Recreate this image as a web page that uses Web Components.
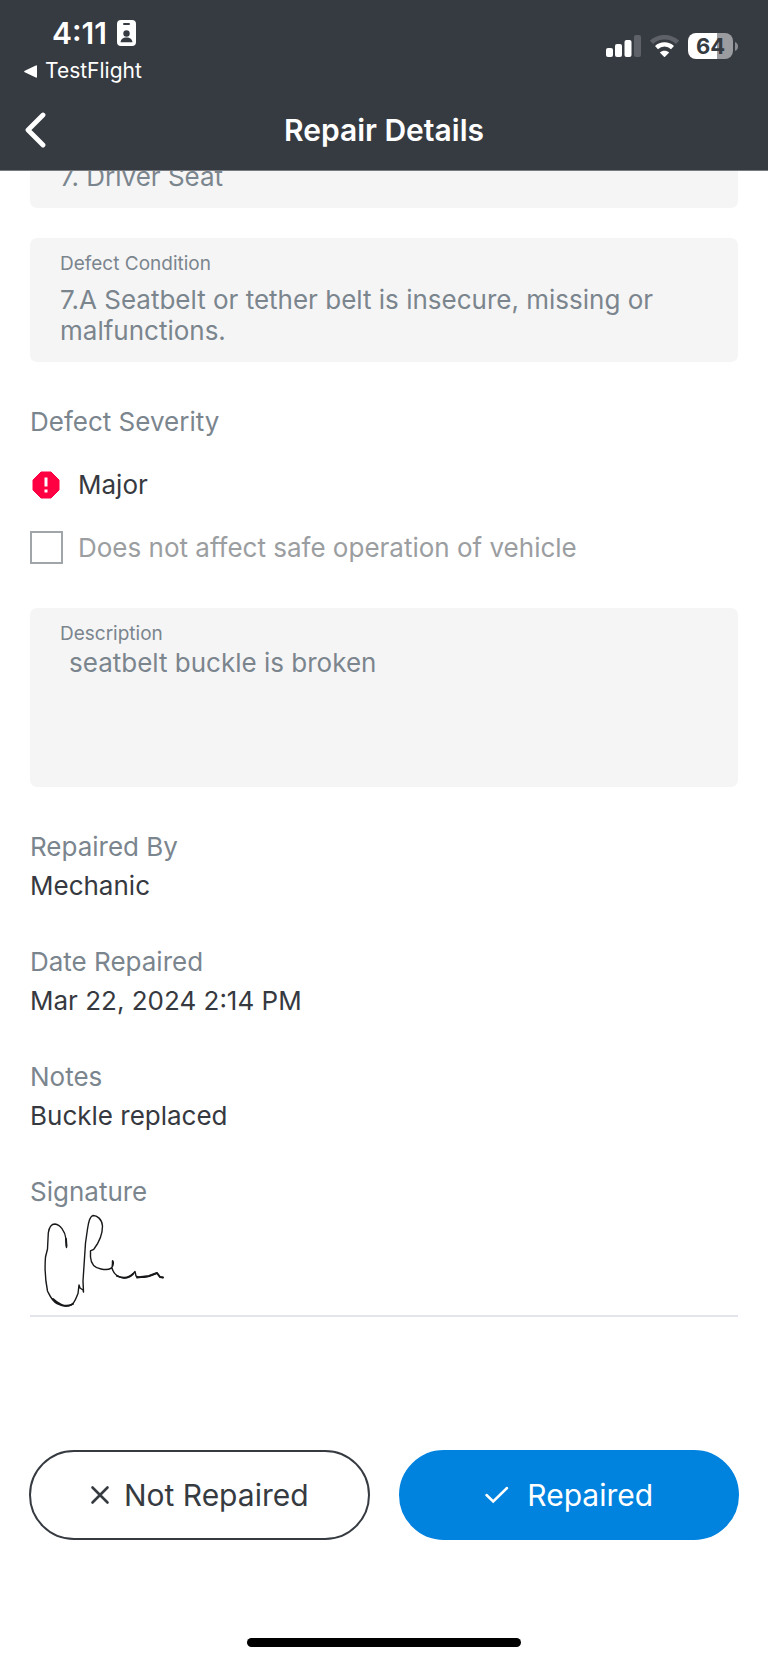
<!DOCTYPE html>
<html lang="en">
<head>
<meta charset="utf-8">
<meta name="viewport" content="width=device-width, initial-scale=1">
<title>Repair Details</title>
<style>
  html { background: #fff; }
  body {
    margin: 0;
    font-family: Inter, "Liberation Sans", sans-serif;
    font-size: 26px;
    line-height: 31px;
    color: #363940;
    --ink: #363a41;
    --muted: #7b858e;
    --panel: #f5f5f5;
    --accent: #0082df;
  }
</style>
</head>
<body>
<repair-page></repair-page>

<template id="status-bar">
  <style>
    :host { display: flex; justify-content: space-between; align-items: flex-start; padding: 16px 30px 0 24px; color: #fff; }
    .time { display: flex; align-items: center; gap: 10px; padding-left: 28px; font-size: 30px; line-height: 34px; font-weight: 600; }
    .return { display: flex; align-items: center; gap: 8px; margin-top: 8px; font-size: 21px; line-height: 26px; color: #fff; text-decoration: none; }
    .right { display: flex; align-items: center; gap: 9px; padding-top: 17px; }
    .battery { display: flex; align-items: center; gap: 2px; }
    .level { width: 45px; border-radius: 8px; text-align: center; font-size: 22px; line-height: 26px; font-weight: 700; color: #363a41; background: linear-gradient(90deg, #fff 64%, #9a9c9f 64%); }
    svg { display: block; }
  </style>
  <div>
    <div class="time"><span>4:11</span>
      <svg width="19" height="26" viewBox="0 0 19 26" aria-hidden="true">
        <rect width="19" height="26" rx="4" fill="#fff"/>
        <rect x="6" y="3" width="7" height="2" rx="1" fill="#363a41"/>
        <circle cx="9.500" cy="13.500" r="3.200" fill="#363a41"/>
        <path d="M3.600 22.300c0-3 2.500-4.800 5.900-4.800s5.900 1.800 5.900 4.800z" fill="#363a41"/>
      </svg>
    </div>
    <a class="return" href="#testflight">
      <svg width="13" height="13" viewBox="0 0 13 13" aria-hidden="true"><path d="M11.800.500Q13 0 13 1.300V11.700Q13 13 11.800 12.500L.800 7.300Q-.600 6.500.800 5.700z" fill="#fff"/></svg>
      <span>TestFlight</span>
    </a>
  </div>
  <div class="right">
    <svg width="35" height="22" viewBox="0 0 35 22" fill="#fff" aria-hidden="true">
      <rect x="0" y="13" width="7" height="9" rx="2"/>
      <rect x="9" y="9" width="7" height="13" rx="2"/>
      <rect x="18.500" y="5" width="7" height="17" rx="2"/>
      <rect x="28" y="0" width="7" height="22" rx="2" opacity=".2"/>
    </svg>
    <svg width="29" height="22" viewBox="0 0 29 22" fill="none" stroke="#fff" aria-hidden="true">
      <path d="M1.500 7.300C8.800.500 20.200.500 27.500 7.300" stroke-width="4.500" opacity=".2"/>
      <path d="M6.500 12.600c4.500-4.200 11.500-4.200 16 0" stroke-width="4.300"/>
      <path d="M14.500 22.300l-4.700-4.900c2.700-2.300 6.700-2.300 9.400 0z" fill="#fff" stroke="none"/>
    </svg>
    <div class="battery"><div class="level">64</div>
      <svg width="3" height="9" viewBox="0 0 3 9" aria-hidden="true"><path d="M0 0c4 1.500 4 7.500 0 9z" fill="#8b8d91"/></svg>
    </div>
  </div>
</template>

<template id="nav-bar">
  <style>
    :host { display: grid; grid-template-columns: 60px 1fr 60px; align-items: center; padding: 28px 0 22px; color: #fff; }
    button { justify-self: start; display: block; margin: 0; padding: 0 0 0 25px; border: 0; background: none; color: inherit; }
    svg { display: block; }
    h1 { margin: 0; text-align: center; font-size: 30px; line-height: 36px; font-weight: 600; }
  </style>
  <button type="button" aria-label="Back"><svg width="21" height="36" viewBox="0 0 21 36" fill="none" stroke="#fff" stroke-width="4.800" stroke-linecap="round" stroke-linejoin="round"><path d="M18 3L3 18l15 15"/></svg></button>
  <h1><slot></slot></h1>
</template>

<template id="read-field">
  <style>
    :host { display: block; padding: 14px 30px 16px; border-radius: 7px; background: var(--panel); color: var(--muted); }
    label { display: block; font-size: 19px; line-height: 24px; margin-bottom: 8px; }
    label:empty { display: none; }
    textarea { display: block; box-sizing: border-box; width: 100%; margin: 0; padding: 0; border: 0; outline: 0; resize: none; overflow: hidden; background: none; font: inherit; color: inherit; }
    :host([multiline]) label { margin-bottom: 1px; }
    :host([multiline]) textarea { padding-left: 9px; }
  </style>
  <label for="value"></label>
  <textarea id="value" readonly></textarea>
</template>

<template id="defect-severity">
  <style>
    :host { display: flex; flex-direction: column; gap: 30px; line-height: 33px; }
    h2 { margin: 0; font: inherit; color: var(--muted); }
    .row { display: grid; grid-template-columns: 34px 1fr; column-gap: 14px; align-items: center; }
    .off { color: #9b9ea1; }
    svg { display: block; }
    input { appearance: none; box-sizing: border-box; width: 33px; height: 33px; margin: 0; border: 2px solid #a0a5aa; background: #fff; }
  </style>
  <h2>Defect Severity</h2>
  <div class="row">
    <svg width="32" height="28" viewBox="0 0 32 28" aria-hidden="true">
      <path d="M11 1h10l8 8v10l-8 8H11l-8-8V9z" fill="#ff0042" stroke="#ff0042" stroke-width="1" stroke-linejoin="round"/>
      <path d="M16 6.500v9M16 18.500v3" stroke="#fff" stroke-width="3"/>
    </svg>
    <span>Major</span>
  </div>
  <div class="row off"><input type="checkbox" id="safe"><label for="safe">Does not affect safe operation of vehicle</label></div>
</template>

<template id="detail-item">
  <style>
    :host { display: flex; flex-direction: column; gap: 8px; }
    .name { color: var(--muted); }
  </style>
  <div class="name"></div>
  <div><slot></slot></div>
</template>

<template id="signature-box">
  <style>
    :host { display: block; border-bottom: 2px solid #e2e6ea; }
    .name { color: var(--muted); }
    svg { display: block; margin: 4px 0 4px 12px; }
  </style>
  <div class="name">Signature</div>
  <svg width="124" height="100" viewBox="0 0 124 100" role="img" aria-label="Signature" fill="none" stroke="#17181a" stroke-width="1.400" stroke-linecap="round" stroke-linejoin="round">
    <path d="M24.500 36.500L24 28C23 20 18 13.500 13 13C9 13 7 17 6.300 22L5.500 38L3.500 46C2.500 58 3.500 70 5.500 80C8 85 10 90 15 92.500C20 95 25 96 29 94C33 92 34 87 36 82.500L37 74L38 77L41 79L41.500 81L41 70L43.500 32L45.500 18C46.500 11 48 5 51 4.500C55 4.500 60 8 60.500 15C60.500 25 55 34 52 38C50 40 48 39 48.500 40.500L48.500 46C49 54 53 57 59 58C64 59 70 59 71 54C72 50 70 48 70.500 52L70 57C72 65 77 66.500 82 67C88 67 91 63 93 60.500L94 65C96 67 101 66.500 106 65.500L115 62L118 66L121 66.500"/>
    <path d="M24.500 35L24 28M11 88C20 96 25 96 31 93M75 65C82 68 87 67 91 63M95 66.500L107 65L115 62L118 66L121 66.500" stroke-width="1.900"/>
  </svg>
</template>

<template id="action-button">
  <style>
    :host { display: block; flex: 1; }
    button { display: flex; align-items: center; justify-content: center; gap: 14px; box-sizing: border-box; width: 100%; margin: 0; padding: 25px 20px; border: 2px solid var(--ink); border-radius: 46px; background: #fff; color: var(--ink); font: inherit; font-size: 30px; line-height: 36px; }
    :host([primary]) button { gap: 18px; border-color: var(--accent); background: var(--accent); color: #fff; }
  </style>
  <button type="button"><slot name="icon"></slot><span><slot></slot></span></button>
</template>

<template id="repair-page">
  <style>
    :host { display: flex; flex-direction: column; min-height: 100vh; }
    header { position: relative; z-index: 1; background: var(--ink); border-bottom: 1px solid #777b80; }
    main { padding: 0 30px; margin-top: -10px; }
    read-field + read-field { margin-top: 30px; }
    .first { border-radius: 0 0 7px 7px; padding-top: 0; }
    defect-severity { margin: 43px 0 44px; }
    .details { display: flex; flex-direction: column; gap: 45px; margin-top: 44px; }
    .actions { display: flex; gap: 29px; margin: 133px -1px 0; }
    .home { width: 274px; height: 9px; border-radius: 5px; background: #000; margin: 98px auto 14px; }
    svg { display: block; }
  </style>
  <header><status-bar></status-bar><nav-bar>Repair Details</nav-bar></header>
  <main>
    <read-field class="first" name="Defect" hide-label rows="1" value="7. Driver Seat"></read-field>
    <read-field name="Defect Condition" rows="2" value="7.A Seatbelt or tether belt is insecure, missing or malfunctions."></read-field>
    <defect-severity></defect-severity>
    <read-field multiline name="Description" rows="4" value="seatbelt buckle is broken"></read-field>
    <div class="details">
      <detail-item name="Repaired By">Mechanic</detail-item>
      <detail-item name="Date Repaired">Mar 22, 2024 2:14 PM</detail-item>
      <detail-item name="Notes">Buckle replaced</detail-item>
      <signature-box></signature-box>
    </div>
    <div class="actions">
      <action-button><svg slot="icon" width="20" height="20" viewBox="0 0 20 20" fill="none" stroke="currentColor" stroke-width="2.600" stroke-linecap="round" aria-hidden="true"><path d="M2.500 2.500l15 15M17.500 2.500l-15 15"/></svg>Not Repaired</action-button>
      <action-button primary><svg slot="icon" width="25" height="20" viewBox="0 0 25 20" fill="none" stroke="currentColor" stroke-width="2.500" stroke-linecap="round" aria-hidden="true"><path d="M2.500 10l6.700 6.500L23 3"/></svg>Repaired</action-button>
    </div>
  </main>
  <div class="home"></div>
</template>

<script>
  class TemplateElement extends HTMLElement {
    constructor() {
      super();
      this.attachShadow({ mode: "open" });
      this.shadowRoot.append(document.getElementById(this.localName).content.cloneNode(true));
    }
  }

  class ReadField extends TemplateElement {
    connectedCallback() {
      const area = this.shadowRoot.querySelector("textarea");
      const name = this.getAttribute("name");
      if (this.hasAttribute("hide-label")) area.setAttribute("aria-label", name);
      else this.shadowRoot.querySelector("label").textContent = name;
      area.rows = Number(this.getAttribute("rows"));
      area.value = this.getAttribute("value");
    }
  }

  class DetailItem extends TemplateElement {
    connectedCallback() {
      this.shadowRoot.querySelector(".name").textContent = this.getAttribute("name");
    }
  }

  customElements.define("status-bar", class extends TemplateElement {});
  customElements.define("nav-bar", class extends TemplateElement {});
  customElements.define("read-field", ReadField);
  customElements.define("defect-severity", class extends TemplateElement {});
  customElements.define("detail-item", DetailItem);
  customElements.define("signature-box", class extends TemplateElement {});
  customElements.define("action-button", class extends TemplateElement {});
  customElements.define("repair-page", class extends TemplateElement {});
</script>
</body>
</html>
